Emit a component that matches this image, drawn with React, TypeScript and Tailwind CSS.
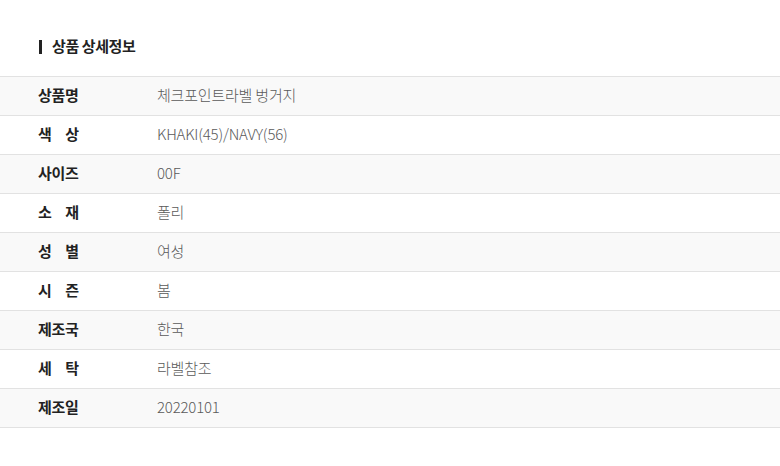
import React from "react";

const rows = [
  { label: ["상품명"], value: "체크포인트라벨 벙거지" },
  { label: ["색", "상"], value: "KHAKI(45)/NAVY(56)" },
  { label: ["사이즈"], value: "00F" },
  { label: ["소", "재"], value: "폴리" },
  { label: ["성", "별"], value: "여성" },
  { label: ["시", "즌"], value: "봄" },
  { label: ["제조국"], value: "한국" },
  { label: ["세", "탁"], value: "라벨참조" },
  { label: ["제조일"], value: "20220101" },
];

const App = () => {
  return (
    <div className="min-h-[466px] w-[780px] bg-white font-['Noto_Sans_CJK_KR','Noto_Sans',sans-serif]">
      <div className="flex h-[76px] items-center pl-[39px] pt-[17px]">
        <span className="h-[14px] w-[3px] bg-[#222]" />
        <h2 className="ml-[10px] text-[15px] font-bold tracking-[-0.4px] text-[#222]">상품 상세정보</h2>
      </div>
      <div className="border-t border-[#e2e2e2]">
        {rows.map((row, i) => (
          <div
            key={i}
            className={
              "flex h-[39px] items-center border-b border-[#e2e2e2] pb-[1px] " +
              (i % 2 === 0 ? "bg-[#f9f9f9]" : "bg-white")
            }
          >
            <div className="flex w-[157px] pl-[38px]">
              {row.label.length > 1 ? (
                <span className="flex w-[41px] justify-between text-[15px] font-bold text-[#222]">
                  {row.label.map((c, j) => (
                    <span key={j}>{c}</span>
                  ))}
                </span>
              ) : (
                <span className="text-[15px] font-bold tracking-[-0.3px] text-[#222]">{row.label[0]}</span>
              )}
            </div>
            <span className="text-[15px] font-light tracking-[-0.2px] text-[#5a5a5a]">{row.value}</span>
          </div>
        ))}
      </div>
    </div>
  );
};

export default App;
